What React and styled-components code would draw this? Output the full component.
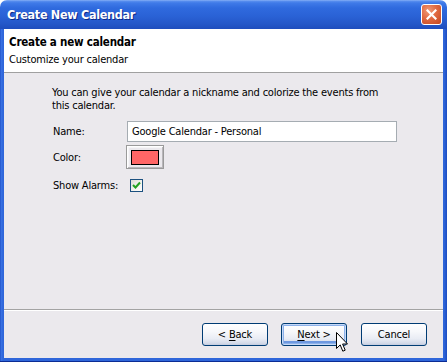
import React from "react";
import styled, { createGlobalStyle } from "styled-components";

const Global = createGlobalStyle`
  html, body { margin: 0; padding: 0; background: #ffffff; }
  body { font-family: "DejaVu Sans Condensed", "DejaVu Sans", sans-serif; font-size: 11px; color: #000; letter-spacing: -0.2px; }
  * { box-sizing: border-box; }
`;

const Window = styled.div`
  width: 447px;
  height: 362px;
  display: flex;
  flex-direction: column;
  position: relative;
`;

const TitleBar = styled.div`
  height: 29px;
  flex: none;
  display: flex;
  align-items: center;
  justify-content: space-between;
  padding: 0 5px 0 7px;
  border-radius: 7px 7px 0 0;
  background: linear-gradient(180deg, #8fb6f6 0px, #5a8fef 1px, #3f7ae8 3px, #2f6ade 8px, #2a62d6 16px, #2457c8 24px, #1e4dbd 29px);
`;

const Title = styled.span`
  font-family: "DejaVu Sans Condensed", "DejaVu Sans", sans-serif;
  font-weight: bold;
  font-size: 12.5px;
  color: #ffffff;
  text-shadow: 1px 1px 0 #0c2a8a;
  letter-spacing: -0.3px;
`;

const CloseButton = styled.div`
  width: 21px;
  height: 21px;
  border: 1px solid #ffffff;
  border-radius: 3px;
  background: radial-gradient(circle at 35% 30%, #f09a78 0%, #e06a42 45%, #c4461f 100%);
  display: flex;
  align-items: center;
  justify-content: center;
`;

const Frame = styled.div`
  flex: 1;
  display: flex;
  flex-direction: column;
  padding: 0 4px 4px 4px;
  background: linear-gradient(90deg, #1a47c0 0px, #3a73e4 1px, #2f66da 3px, #2f66da calc(100% - 3px), #1c4cc0 100%);
  box-shadow: inset 0 -1px 0 #0b2c94;
`;

const Body = styled.div`
  flex: 1;
  display: flex;
  flex-direction: column;
  background: #ebe9ed;
`;

const Header = styled.div`
  height: 44px;
  background: #ffffff;
  border-bottom: 1px solid #a0a0a0;
  padding: 5px 5px 0 5px;
  display: flex;
  flex-direction: column;
`;

const HeaderTitle = styled.div`
  font-weight: bold;
  font-size: 11.5px;
  line-height: 17px;
`;

const HeaderSub = styled.div`
  line-height: 17px;
`;

const Content = styled.div`
  flex: 1;
  padding: 13px 40px 0 48px;
  display: flex;
  flex-direction: column;
`;

const Description = styled.p`
  margin: 0 0 9px 0;
  line-height: 13px;
  width: 340px;
`;

const Form = styled.div`
  display: grid;
  grid-template-columns: 73px 1fr;
  grid-auto-rows: auto;
  row-gap: 3px;
  align-items: center;
  padding-left: 1px;
`;

const Label = styled.div`
  line-height: 13px;
`;

const TextInput = styled.div`
  width: 270px;
  height: 21px;
  margin-left: 1px;
  border: 1px solid #a5acb2;
  background: #ffffff;
  padding: 0 4px;
  display: flex;
  align-items: center;
  line-height: 13px;
`;

const ColorButton = styled.div`
  width: 38px;
  height: 24px;
  border: 1px solid #9a9a9a;
  box-shadow: inset 1px 1px 0 #ffffff, inset -1px -1px 0 #b8b6ba, inset 2px 2px 0 #f6f5f7;
  background: #ebe9ed;
  display: flex;
  align-items: center;
  justify-content: center;
`;

const Swatch = styled.div`
  width: 28px;
  height: 15px;
  border: 1px solid #000000;
  background: ${(p) => p.color};
`;

const CheckRow = styled.div`
  height: 26px;
  display: flex;
  align-items: center;
  padding-left: 4px;
`;

const Checkbox = styled.div`
  width: 13px;
  height: 13px;
  border: 1px solid #1c5180;
  background: linear-gradient(135deg, #dcdcd6 0%, #f4f4f0 60%, #ffffff 100%);
  display: flex;
  align-items: center;
  justify-content: center;
`;

const Footer = styled.div`
  height: 49px;
  border-top: 1px solid #a3a3a3;
  box-shadow: inset 0 1px 0 #ffffff;
  display: flex;
  justify-content: flex-end;
  align-items: flex-start;
  gap: 13px;
  padding: 13px 16px 0 0;
  position: relative;
`;

const Button = styled.div`
  width: 66px;
  height: 23px;
  border: 1px solid #003c74;
  border-radius: 3px;
  background: linear-gradient(180deg, #ffffff 0%, #f7f8fb 35%, #e9ecf4 70%, #d3d9e8 92%, #c3cadd 100%);
  box-shadow: ${(p) =>
    p.focused
      ? "inset 0 0 0 1px #c6d9f7, inset 0 0 0 2px #8cb1ea, inset 0 -2px 0 2px #6d98e0"
      : "none"};
  display: flex;
  align-items: center;
  justify-content: center;
  line-height: 13px;
  margin-right: ${(p) => (p.extra ? 1 : 0)}px;

  u { text-decoration: underline; text-underline-offset: 2px; }
`;

const Cursor = styled.svg`
  position: absolute;
  left: 332px;
  top: 22px;
  pointer-events: none;
`;

export default function App() {
  return (
    <>
      <Global />
      <Window>
        <TitleBar>
          <Title>Create New Calendar</Title>
          <CloseButton>
            <svg width="11" height="11" viewBox="0 0 11 11">
              <path d="M1.5 1.5 L9.5 9.5 M9.5 1.5 L1.5 9.5" stroke="#ffffff" strokeWidth="2.2" strokeLinecap="square" />
            </svg>
          </CloseButton>
        </TitleBar>
        <Frame>
          <Body>
            <Header>
              <HeaderTitle>Create a new calendar</HeaderTitle>
              <HeaderSub>Customize your calendar</HeaderSub>
            </Header>
            <Content>
              <Description>
                You can give your calendar a nickname and colorize the events from this calendar.
              </Description>
              <Form>
                <Label>Name:</Label>
                <TextInput>Google Calendar - Personal</TextInput>
                <Label>Color:</Label>
                <ColorButton>
                  <Swatch color="#ff6666" />
                </ColorButton>
                <Label>Show Alarms:</Label>
                <CheckRow>
                  <Checkbox>
                    <svg width="9" height="9" viewBox="0 0 9 9">
                      <path d="M1 4 L3.5 6.5 L8 1.5" fill="none" stroke="#21a121" strokeWidth="2" />
                    </svg>
                  </Checkbox>
                </CheckRow>
              </Form>
            </Content>
            <Footer>
              <Button>
                &lt;&nbsp;<u>B</u>ack
              </Button>
              <Button focused extra>
                <u>N</u>ext &gt;
              </Button>
              <Button>Cancel</Button>
              <Cursor width="14" height="22" viewBox="0 0 14 22">
                <path
                  d="M0.5 0.5 L0.5 16.5 L4.2 12.9 L6.8 19.2 L9.2 18.2 L6.6 12 L11.5 12 Z"
                  fill="#ffffff"
                  stroke="#000000"
                  strokeWidth="1"
                  strokeLinejoin="miter"
                />
              </Cursor>
            </Footer>
          </Body>
        </Frame>
      </Window>
    </>
  );
}
